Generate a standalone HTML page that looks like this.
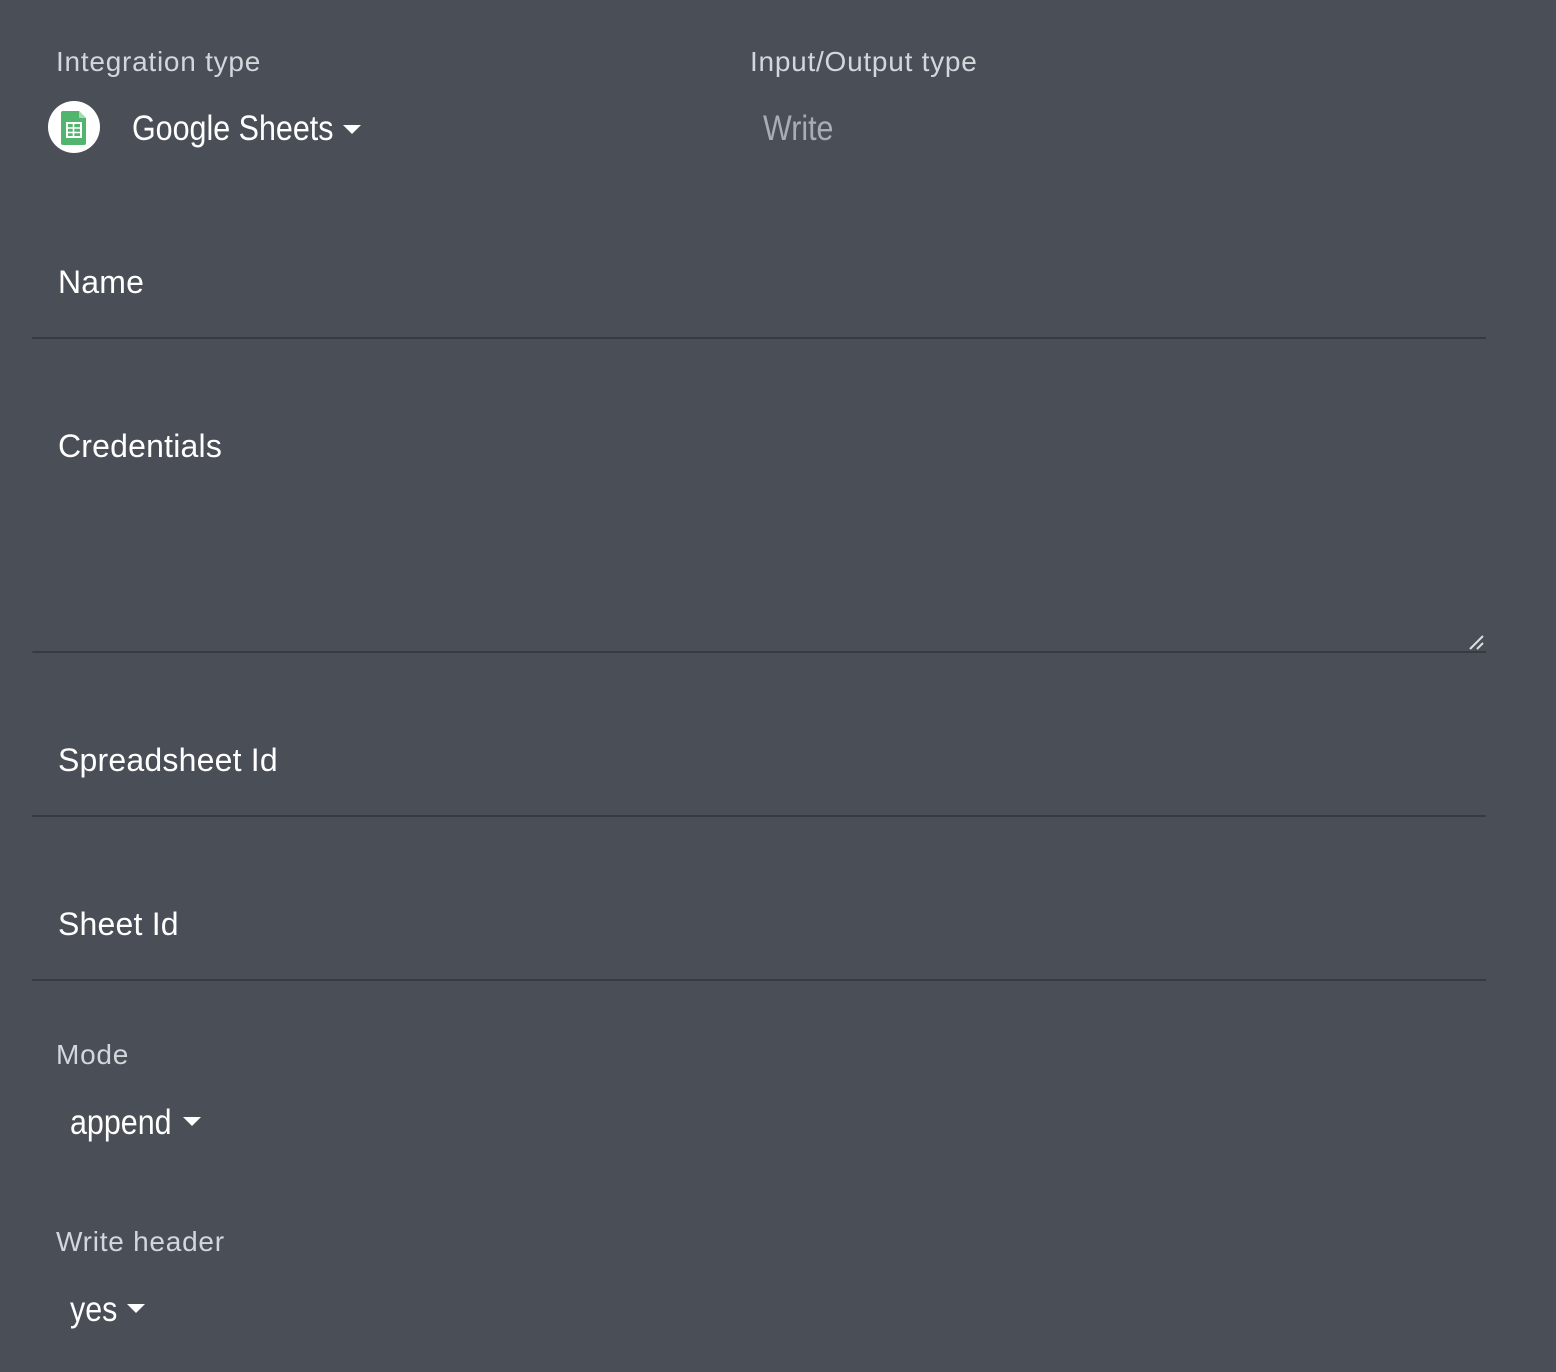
<!DOCTYPE html>
<html><head><style>
html,body{margin:0;padding:0}
body{width:1556px;height:1372px;background:#4a4f57;position:relative;overflow:hidden;font-family:"Liberation Sans",sans-serif}
.a{position:absolute;white-space:nowrap}
.lbl{font-size:28px;color:#d3d6db;letter-spacing:0.75px}
.fld{font-size:32px;color:#fff;letter-spacing:0.2px}
.cond{font-size:35px;color:#fff;transform:scaleX(0.87);transform-origin:0 50%}
.line{position:absolute;left:32px;width:1454px;height:2px;background:#363a41}
.tri{position:absolute;width:0;height:0;border-left:9px solid transparent;border-right:9px solid transparent;border-top:9px solid #fff}
</style></head><body>
<div class="a lbl" style="left:56px;top:46px">Integration type</div>
<div class="a lbl" style="left:750px;top:46px">Input/Output type</div>
<div class="a" style="left:48px;top:101px;width:52px;height:52px;border-radius:50%;background:#fff">
<svg width="52" height="52" viewBox="0 0 52 52"><path d="M15 10h16l7 7v25a2 2 0 0 1-2 2H15a2 2 0 0 1-2-2V12a2 2 0 0 1 2-2z" fill="#34a853" opacity="0.85"/><path d="M31 10v7h7z" fill="#a7d8b5"/><rect x="19" y="22" width="14" height="14" fill="none" stroke="#fff" stroke-width="2"/><path d="M19 27h14M19 31.5h14M25.5 22v14" stroke="#fff" stroke-width="1.6"/></svg></div>
<div class="a cond" style="left:132px;top:109px">Google Sheets</div>
<div class="tri" style="left:343px;top:125px"></div>
<div class="a cond" style="left:763px;top:109px;color:#a9adb3">Write</div>
<div class="a fld" style="left:58px;top:264px">Name</div>
<div class="line" style="top:337px"></div>
<div class="a fld" style="left:58px;top:428px">Credentials</div>
<div class="line" style="top:651px;border-radius:0 0 0 8px"></div>
<svg class="a" style="left:1468px;top:634px" width="18" height="18"><path d="M2 15L15 2M9 15L15 9" stroke="#ddd" stroke-width="2"/></svg>
<div class="a fld" style="left:58px;top:742px">Spreadsheet Id</div>
<div class="line" style="top:815px"></div>
<div class="a fld" style="left:58px;top:906px">Sheet Id</div>
<div class="line" style="top:979px"></div>
<div class="a lbl" style="left:56px;top:1039px">Mode</div>
<div class="a cond" style="left:70px;top:1103px">append</div>
<div class="tri" style="left:183px;top:1117px"></div>
<div class="a lbl" style="left:56px;top:1226px">Write header</div>
<div class="a cond" style="left:70px;top:1290px">yes</div>
<div class="tri" style="left:127px;top:1304px"></div>
</body></html>
